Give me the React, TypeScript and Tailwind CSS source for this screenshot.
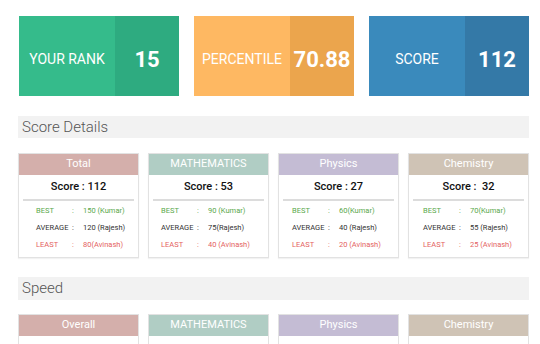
const stats = [
  { label: "YOUR RANK", value: "15", left: "bg-[#35bb8b]", right: "bg-[#2eab80]" },
  { label: "PERCENTILE", value: "70.88", left: "bg-[#feb862]", right: "bg-[#eba54d]" },
  { label: "SCORE", value: "112", left: "bg-[#3a8abc]", right: "bg-[#3479a7]" },
]

const subjects = [
  {
    title: "Total",
    head: "bg-[#d4afab]",
    score: "Score : 112",
    pad: "pl-[17px]",
    best: "150 (Kumar)",
    avg: "120 (Rajesh)",
    least: "80(Avinash)",
  },
  {
    title: "MATHEMATICS",
    head: "bg-[#b0cdc4]",
    score: "Score : 53",
    pad: "pl-[12px]",
    best: "90 (Kumar)",
    avg: "75(Rajesh)",
    least: "40 (Avinash)",
  },
  {
    title: "Physics",
    head: "bg-[#c4bcd4]",
    score: "Score : 27",
    pad: "pl-[13px]",
    best: "60(Kumar)",
    avg: "40 (Rajesh)",
    least: "20 (Avinash)",
  },
  {
    title: "Chemistry",
    head: "bg-[#cfc3b5]",
    score: "Score :  32",
    pad: "pl-[14px]",
    best: "70(Kumar)",
    avg: "55 (Rajesh)",
    least: "25 (Avinash)",
  },
]

const speed = [
  { title: "Overall", head: "bg-[#d4afab]" },
  { title: "MATHEMATICS", head: "bg-[#b0cdc4]" },
  { title: "Physics", head: "bg-[#c4bcd4]" },
  { title: "Chemistry", head: "bg-[#cfc3b5]" },
]

function Row({ label, value, color }: { label: string; value: string; color: string }) {
  return (
    <div className={`grid grid-cols-[36px_11px_1fr] h-[17px] items-center text-[7.5px] ${color}`}>
      <span>{label}</span>
      <span>:</span>
      <span className="whitespace-pre">{value}</span>
    </div>
  )
}

export default function App() {
  return (
    <div className="min-h-screen bg-white font-['Roboto',sans-serif] pt-4">
      <div className="ml-[18px] w-[511px]">
        <div className="grid grid-cols-3 gap-[15px] pl-px">
          {stats.map((s) => (
            <div key={s.label} className="flex h-20 text-white">
              <div className={`flex-[3] flex items-center justify-center pt-[6px] text-[14px] ${s.left}`}>
                {s.label}
              </div>
              <div className={`flex-[2] flex items-center justify-center pt-[6px] text-[22px] font-bold ${s.right}`}>
                {s.value}
              </div>
            </div>
          ))}
        </div>

        <div className="mt-5 h-[22px] bg-[#f2f2f2] flex items-center pl-1 text-[15px] font-light text-[#555]">
          Score Details
        </div>

        <div className="mt-[15px] grid grid-cols-4 gap-[9px]">
          {subjects.map((c) => (
            <div key={c.title} className="h-[105px] border border-[#e2e2e2] shadow-[0_1px_1px_rgba(0,0,0,0.05)]">
              <div className={`h-[21px] flex items-center justify-center text-[11px] text-white ${c.head}`}>
                {c.title}
              </div>
              <div className="h-[24px] flex items-center justify-center text-[11px] font-medium text-[#111] whitespace-pre">
                {c.score}
              </div>
              <div className="mx-1 h-[2px] bg-[#dcdcdc]" />
              <div className={`pt-[1px] ${c.pad}`}>
                <Row label="BEST" value={c.best} color="text-[#5aa84c]" />
                <Row label="AVERAGE" value={c.avg} color="text-[#333]" />
                <Row label="LEAST" value={c.least} color="text-[#e45f62]" />
              </div>
            </div>
          ))}
        </div>

        <div className="mt-[19px] h-[23px] bg-[#f2f2f2] flex items-center pl-1 text-[15px] font-light text-[#555]">
          Speed
        </div>

        <div className="mt-[14px] grid grid-cols-4 gap-[9px]">
          {speed.map((c) => (
            <div key={c.title} className="h-[105px] border border-[#e2e2e2]">
              <div className={`h-[21px] flex items-center justify-center text-[11px] text-white ${c.head}`}>
                {c.title}
              </div>
            </div>
          ))}
        </div>
      </div>
    </div>
  )
}
